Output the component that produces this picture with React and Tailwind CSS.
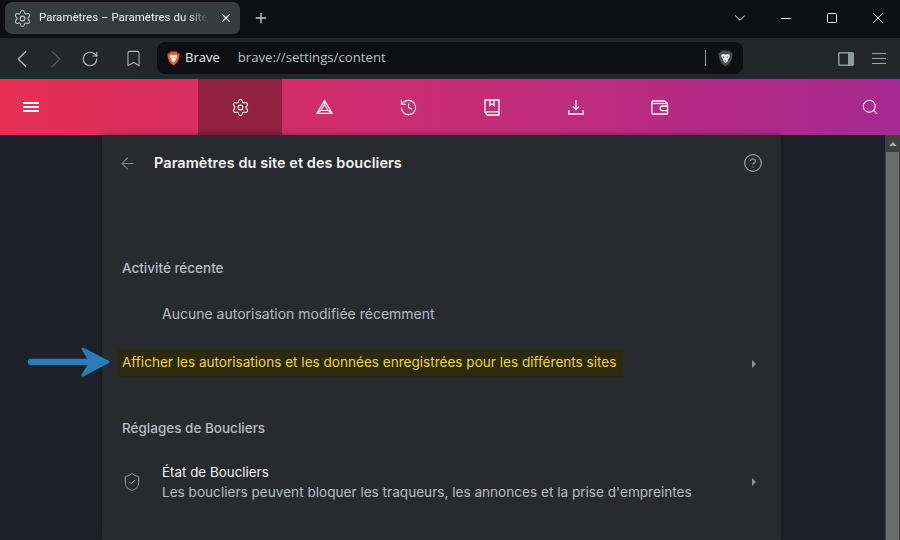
import React from "react";
import { Settings, History, Search, ChevronLeft, ChevronRight, RotateCw, Bookmark, ArrowLeft, CircleHelp, ShieldCheck, X, Plus } from "lucide-react";

function BraveLogo({ className, fill = "#f1562b", inner = "#fff" }) {
  return (
    <svg viewBox="0 0 16 18" className={className}>
      <path d="M4.5 0.5 H11.5 L13.5 2.5 L15.5 3 L15.2 6 L14.3 10.5 L12 14.5 L8 17.5 L4 14.5 L1.7 10.5 L0.8 6 L0.5 3 L2.5 2.5 Z" fill={fill} />
      <path d="M3.5 5 L6 4.3 L8 5 L10 4.3 L12.5 5 L12.4 7.5 L10.5 10 L10.4 11.8 L8 13.8 L5.6 11.8 L5.5 10 L3.6 7.5 Z" fill={inner} />
      <path d="M6.8 11 H9.2 L8 12.2 Z" fill={fill} />
      <path d="M5 6.6 L7 7.4 L6.2 8.6 Z M11 6.6 L9 7.4 L9.8 8.6 Z" fill={fill} />
    </svg>
  );
}

function BatIcon() {
  return (
    <svg viewBox="0 0 18 16" className="w-[17px] h-[16px]" fill="none" stroke="#fff" strokeWidth="1.3" strokeLinejoin="round">
      <path d="M9 1.2 L17 14.8 H1 Z" />
      <path d="M9 5 L12.6 11.6 H5.4 Z" strokeWidth="1.1" />
      <path d="M1 14.8 L5.4 11.6 M17 14.8 L12.6 11.6 M9 1.2 V5" strokeWidth="1.1" />
    </svg>
  );
}

function BookIcon() {
  return (
    <svg viewBox="0 0 16 17" className="w-[16px] h-[17px]" fill="none" stroke="#fff" strokeWidth="1.3">
      <path d="M1 14 V1 H15 V16 H3 A2 2 0 0 1 3 12.8 H15" />
      <path d="M6 1 V6.5 L8 5 L10 6.5 V1" />
    </svg>
  );
}

function TrayDownload() {
  return (
    <svg viewBox="0 0 16 16" className="w-[16px] h-[16px]" fill="none" stroke="#fff" strokeWidth="1.3">
      <path d="M8 1 V10.5 M4.8 7.5 L8 10.7 L11.2 7.5" />
      <path d="M0.8 11 V15 H15.2 V11" />
    </svg>
  );
}

function WalletIcon() {
  return (
    <svg viewBox="0 0 18 15" className="w-[18px] h-[15px]" fill="none" stroke="#fff" strokeWidth="1.3" strokeLinejoin="round">
      <path d="M2 1 H13.5 L16.5 3.5 V14 H2 A1.2 1.2 0 0 1 0.8 13 V2 A1.2 1.2 0 0 1 2 1 Z" />
      <path d="M1 3.5 H16.5" />
      <path d="M17 6 H11.5 A2.2 2.2 0 0 0 11.5 10.6 H17" />
    </svg>
  );
}

function NavItem({ children, active }) {
  return (
    <div className={`w-[84px] flex items-center justify-center ${active ? "bg-[#922042]" : ""}`}>{children}</div>
  );
}

function WinBtn({ d }) {
  return (
    <div className="w-[46px] h-[36px] flex items-center justify-center">
      <svg viewBox="0 0 10 10" className="w-[10px] h-[10px]" fill="none" stroke="#ececec" strokeWidth="1">
        <path d={d} />
      </svg>
    </div>
  );
}

function Arrow() {
  return (
    <svg viewBox="0 0 84 32" className="absolute left-[27px] top-[211px] w-[84px] h-[32px]">
      <path d="M4 16 H76" stroke="#2b7cba" strokeWidth="6.5" strokeLinecap="round" />
      <path d="M56 3 L81 16 L56 29 L64 16 Z" fill="#2b7cba" stroke="#2b7cba" strokeWidth="3" strokeLinejoin="round" />
    </svg>
  );
}

export default function App() {
  return (
    <div className="w-[900px] h-[540px] overflow-hidden flex flex-col bg-[#1e2129] font-['Inter',sans-serif]">
      {/* Title bar */}
      <div className="h-[38px] shrink-0 bg-[#0e0f14] flex items-start pl-[5px] text-white">
        <div className="mt-[2px] w-[235px] h-[32px] rounded-[7px] bg-[#353c3f] flex items-center pl-[8px] pr-[7px]">
          <Settings size={19} strokeWidth={1.3} className="text-[#c5c8ca] shrink-0" />
          <div className="ml-[7px] whitespace-nowrap text-[11.5px] font-['Roboto',sans-serif] text-[#f0f1f1] [mask-image:linear-gradient(to_right,#000_88%,transparent)]">
            Paramètres – Paramètres du site
          </div>
          <X size={14} strokeWidth={2} className="ml-auto text-[#e6e7e8]" />
        </div>
        <Plus size={16} strokeWidth={2} className="ml-[13px] mt-[10px] text-[#c9cbcd]" />
        <div className="ml-auto flex items-center h-[36px] mr-[-1px]">
          <WinBtn d="M0.2 2.5 L5 7.3 L9.8 2.5" />
          <WinBtn d="M0 5.5 H10" />
          <WinBtn d="M1.5 0.5 H8.5 A1 1 0 0 1 9.5 1.5 V8.5 A1 1 0 0 1 8.5 9.5 H1.5 A1 1 0 0 1 0.5 8.5 V1.5 A1 1 0 0 1 1.5 0.5 Z" />
          <WinBtn d="M0 0 L10 10 M10 0 L0 10" />
        </div>
      </div>

      {/* Toolbar */}
      <div className="h-[41px] shrink-0 bg-[#22272b] flex items-center pl-[7px] text-[#b3b8bb]">
        <ChevronLeft size={30} strokeWidth={1} />
        <ChevronRight size={30} strokeWidth={1} className="ml-[4px] text-[#575d60]" />
        <RotateCw size={18} strokeWidth={1.6} className="ml-[10px]" />
        <Bookmark size={19} strokeWidth={1.3} className="ml-[25px]" />
        <div className="ml-[14px] w-[586px] h-[32px] mb-[1px] rounded-[8px] bg-[#0e0f14] flex items-center pl-[10px] pr-[10px]">
          <BraveLogo className="w-[13px] h-[15px]" />
          <span className="ml-[5px] text-[13px] font-['Open_Sans',sans-serif] text-[#eceded]">Brave</span>
          <span className="ml-[18px] text-[13.2px] font-['Open_Sans',sans-serif] text-[#b9bfc3]">brave://settings/content</span>
          <div className="ml-auto w-px h-[16px] bg-[#8d9aa2]" />
          <BraveLogo className="ml-[12px] w-[15px] h-[17px]" fill="#4a4e52" inner="#f0f0f0" />
        </div>
        <svg viewBox="0 0 16 14" className="ml-[95px] w-[16px] h-[14px]" fill="none">
          <rect x="0.75" y="0.75" width="14.5" height="12.5" rx="1" stroke="#8d9aa2" strokeWidth="1.5" />
          <rect x="10" y="1" width="5" height="12" fill="#8d9aa2" />
        </svg>
        <div className="ml-[18px] w-[14px] flex flex-col gap-[4px]">
          <div className="h-px bg-[#9aa3a8]" />
          <div className="h-px bg-[#9aa3a8]" />
          <div className="h-px bg-[#9aa3a8]" />
        </div>
      </div>

      {/* Brave settings nav */}
      <div className="h-[56px] shrink-0 flex items-stretch text-white bg-[linear-gradient(90deg,#e62f52_0%,#c62c75_50%,#a62891_100%)]">
        <div className="w-[198px] flex items-center pl-[23px]">
          <div className="w-[16px] flex flex-col gap-[2px]">
            <div className="h-[2px] bg-white" />
            <div className="h-[2px] bg-white" />
            <div className="h-[2px] bg-white" />
          </div>
        </div>
        <NavItem active><Settings size={19} strokeWidth={1.3} /></NavItem>
        <NavItem><BatIcon /></NavItem>
        <NavItem><History size={19} strokeWidth={1.3} /></NavItem>
        <NavItem><BookIcon /></NavItem>
        <NavItem><TrayDownload /></NavItem>
        <NavItem><WalletIcon /></NavItem>
        <div className="ml-auto flex items-center pr-[21px]">
          <Search size={18} strokeWidth={1.4} />
        </div>
      </div>

      {/* Content */}
      <div className="relative flex-1 min-h-0 flex">
        <div className="flex-1 min-w-0 flex items-stretch pl-[102px]">
          <div className="w-[679px] bg-[#292a2f] shadow-[0_0_6px_rgba(0,0,0,0.35)]">
            <div className="h-[56px] flex items-center pl-[16px] pr-[18px]">
              <ArrowLeft size={19} strokeWidth={1.3} className="text-[#85888c]" />
              <div className="ml-[17px] text-[14.5px] font-semibold text-[#f2f2f3] tracking-[0.05px]">Paramètres du site et des boucliers</div>
              <CircleHelp size={20} strokeWidth={1.4} className="ml-auto text-[#9a9da1]" />
            </div>

            <div className="mt-[68px] pl-[20px] text-[13.5px] font-medium leading-[18px] text-[#b6bdc3]">Activité récente</div>
            <div className="mt-[28px] pl-[60px] text-[14px] leading-[18px] text-[#b6bdc3]">Aucune autorisation modifiée récemment</div>

            <div className="mt-[27px] h-[27px] flex items-center pl-[15px] pr-[25px]">
              <div className="w-[506px] h-[27px] bg-[#2b2910] pl-[5px] pb-[2px] flex items-center text-[13.57px] text-[#f0d23e] whitespace-nowrap">
                Afficher les autorisations et les données enregistrées pour les différents sites
              </div>
              <div className="ml-auto w-0 h-0 border-y-[4px] border-y-transparent border-l-[4px] border-l-[#8d9094]" />
            </div>

            <div className="mt-[42px] pl-[20px] text-[13.5px] font-medium leading-[18px] text-[#b6bdc3]">Réglages de Boucliers</div>

            <div className="mt-[25px] flex items-center pl-[20px] pr-[25px]">
              <ShieldCheck size={20} strokeWidth={1.2} className="text-[#a0a3a7]" />
              <div className="ml-[20px]">
                <div className="text-[13.4px] leading-[20px] text-[#f0f1f2]">État de Boucliers</div>
                <div className="text-[13.6px] leading-[20px] text-[#b6bdc3] whitespace-nowrap">Les boucliers peuvent bloquer les traqueurs, les annonces et la prise d'empreintes</div>
              </div>
              <div className="ml-auto w-0 h-0 border-y-[4px] border-y-transparent border-l-[4px] border-l-[#8d9094]" />
            </div>
          </div>
        </div>

        {/* Scrollbar */}
        <div className="w-[15px] shrink-0 bg-[#3f3f3f] flex flex-col items-center">
          <div className="h-[17px] flex items-center justify-center">
            <div className="w-0 h-0 border-x-[4px] border-x-transparent border-b-[4px] border-b-[#a9a9a9]" />
          </div>
          <div className="w-[13px] flex-1 bg-[#6b6b6b]" />
        </div>

        <Arrow />
      </div>
    </div>
  );
}
